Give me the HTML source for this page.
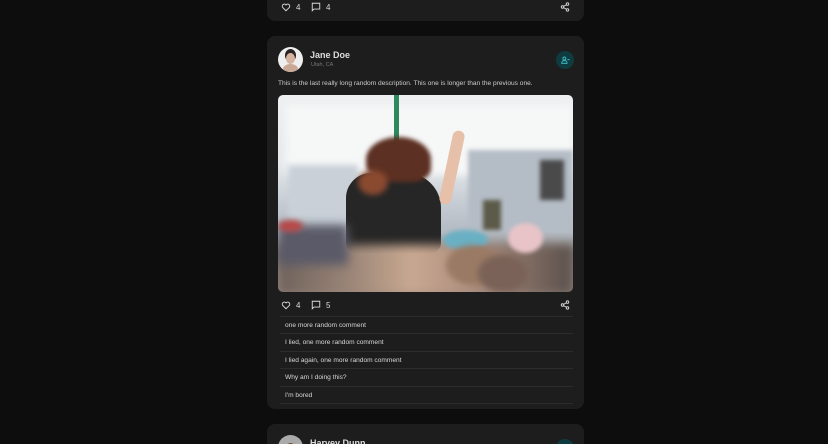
<!DOCTYPE html>
<html><head><style>
*{margin:0;padding:0;box-sizing:border-box}
html,body{width:828px;height:444px;overflow:hidden}
body{background:#0d0d0d;font-family:"Liberation Sans",sans-serif;position:relative;color:#ddd}
.card{position:absolute;left:267px;width:317px;background:#1d1d1d;border-radius:8px}
.act{position:absolute;font-size:8px;color:#ddd}
.ic{position:absolute}
.row{position:absolute;left:280px;width:293px;height:17.4px;border-bottom:1px solid #2c2c2c;font-size:6.6px;color:#d8d8d8;padding-left:5px;line-height:17px}
.img{position:absolute;left:278px;top:95px;width:295px;height:197px;border-radius:5px;overflow:hidden;background:linear-gradient(#eef0f1 0%,#e6e9ec 35%,#c5ccd3 55%,#b3bac2 70%,#8a807a 80%,#9a8a80 100%)}
.img div{position:absolute}
</style></head><body>
<div class="card" style="top:-10px;height:31px"></div>
<svg class="ic" style="left:281px;top:2px" width="10" height="10" viewBox="0 0 24 24" fill="none" stroke="#ddd" stroke-width="2.2"><path d="M12 21l-8-8a5 5 0 0 1 8-6 5 5 0 0 1 8 6z"/></svg>
<div class="act" style="left:296px;top:3px">4</div>
<svg class="ic" style="left:311px;top:2px" width="10" height="10" viewBox="0 0 24 24" fill="none" stroke="#ddd" stroke-width="2.2"><path d="M3 3h18v14H7l-4 4z"/></svg>
<div class="act" style="left:326px;top:3px">4</div>
<svg class="ic" style="left:560px;top:2px" width="10" height="10" viewBox="0 0 24 24" fill="none" stroke="#ddd" stroke-width="2.2"><circle cx="18" cy="5" r="3"/><circle cx="6" cy="12" r="3"/><circle cx="18" cy="19" r="3"/><path d="M8.6 13.5l6.8 4M15.4 6.5l-6.8 4"/></svg>

<div class="card" style="top:36px;height:373px"></div>
<div style="position:absolute;left:278px;top:47px;width:25px;height:25px;border-radius:50%;overflow:hidden;background:#eee">
 <div style="position:absolute;left:7px;top:2px;width:11px;height:13px;border-radius:50%;background:#2a2222"></div>
 <div style="position:absolute;left:8px;top:6px;width:9px;height:11px;border-radius:50%;background:#d6b2a0"></div>
 <div style="position:absolute;left:5px;top:17px;width:15px;height:10px;border-radius:50% 50% 0 0;background:#caa896"></div>
</div>
<div style="position:absolute;left:310px;top:50px;font-size:9px;font-weight:bold;color:#ddd">Jane Doe</div>
<div style="position:absolute;left:311px;top:62px;font-size:5.5px;color:#777">Utah, CA</div>
<div style="position:absolute;left:556px;top:51px;width:18px;height:18px;border-radius:50%;background:#0e3b40"></div>
<svg class="ic" style="left:561px;top:56px" width="9" height="8" viewBox="0 0 24 20" fill="none" stroke="#3fb5bf" stroke-width="2.5"><circle cx="9" cy="6" r="4"/><path d="M2 19v-2a5 5 0 0 1 5-5h4a5 5 0 0 1 5 5v2zM17 9h6"/></svg>
<div style="position:absolute;left:278px;top:80px;font-size:6.6px;color:#ccc">This is the last really long random description. This one is longer than the previous one.</div>
<div class="img">
<div style="left:8px;top:10px;width:287px;height:70px;background:#f6f7f7;filter:blur(4px)"></div>
<div style="left:190px;top:55px;width:105px;height:80px;background:#b4bcc6;filter:blur(2px)"></div>
<div style="left:10px;top:70px;width:70px;height:60px;background:#c9d0d8;filter:blur(3px)"></div>
<div style="left:262px;top:65px;width:24px;height:40px;background:#4a4a4a;filter:blur(2px)"></div>
<div style="left:205px;top:105px;width:18px;height:30px;background:#5c5a48;filter:blur(2px)"></div>
<div style="left:116px;top:0;width:5px;height:70px;background:#2e8a5c"></div>
<div style="left:68px;top:78px;width:95px;height:80px;background:#262626;border-radius:25px 35px 10px 10px"></div>
<div style="left:88px;top:42px;width:65px;height:45px;background:#5c3022;border-radius:50% 50% 30% 40%;filter:blur(2px)"></div>
<div style="left:80px;top:75px;width:30px;height:25px;background:#8a4a30;border-radius:50%;filter:blur(3px)"></div>
<div style="left:168px;top:35px;width:12px;height:75px;background:#e6c0a8;border-radius:6px;transform:rotate(12deg)"></div>
<div style="left:0;top:150px;width:295px;height:50px;background:linear-gradient(90deg,#6f625c,#9c8678 25%,#c8a890 45%,#b09080 65%,#5a504c);filter:blur(5px)"></div>
<div style="left:0;top:130px;width:70px;height:40px;background:#5a5a68;filter:blur(5px)"></div>
<div style="left:165px;top:135px;width:45px;height:20px;background:#6ab0c4;border-radius:50%;filter:blur(2px)"></div>
<div style="left:168px;top:150px;width:55px;height:40px;background:#9a7a64;border-radius:50%;filter:blur(3px)"></div>
<div style="left:230px;top:128px;width:35px;height:30px;background:#e8c4c8;border-radius:50%;filter:blur(2px)"></div>
<div style="left:200px;top:160px;width:50px;height:37px;background:#7a6258;border-radius:50%;filter:blur(3px)"></div>
<div style="left:0;top:125px;width:25px;height:12px;background:#b84848;border-radius:50%;filter:blur(3px)"></div>
</div>
<svg class="ic" style="left:281px;top:300px" width="10" height="10" viewBox="0 0 24 24" fill="none" stroke="#ddd" stroke-width="2.2"><path d="M12 21l-8-8a5 5 0 0 1 8-6 5 5 0 0 1 8 6z"/></svg>
<div class="act" style="left:296px;top:301px">4</div>
<svg class="ic" style="left:311px;top:300px" width="10" height="10" viewBox="0 0 24 24" fill="none" stroke="#ddd" stroke-width="2.2"><path d="M3 3h18v14H7l-4 4z"/></svg>
<div class="act" style="left:326px;top:301px">5</div>
<svg class="ic" style="left:560px;top:300px" width="10" height="10" viewBox="0 0 24 24" fill="none" stroke="#ddd" stroke-width="2.2"><circle cx="18" cy="5" r="3"/><circle cx="6" cy="12" r="3"/><circle cx="18" cy="19" r="3"/><path d="M8.6 13.5l6.8 4M15.4 6.5l-6.8 4"/></svg>
<div style="position:absolute;left:280px;top:316px;width:293px;border-top:1px solid #2c2c2c"></div>
<div class="row" style="top:317px">one more random comment</div>
<div class="row" style="top:334.4px">I lied, one more random comment</div>
<div class="row" style="top:351.8px">I lied again, one more random comment</div>
<div class="row" style="top:369.2px">Why am I doing this?</div>
<div class="row" style="top:386.6px">I'm bored</div>

<div class="card" style="top:424px;height:30px"></div>
<div style="position:absolute;left:278px;top:435px;width:25px;height:25px;border-radius:50%;background:radial-gradient(circle at 50% 55%,#7a5040 0 30%,#aaa 31%)"></div>
<div style="position:absolute;left:310px;top:438px;font-size:9px;font-weight:bold;color:#ddd">Harvey Dunn</div>
<div style="position:absolute;left:556px;top:439px;width:18px;height:18px;border-radius:50%;background:#0e3b40"></div>
</body></html>
